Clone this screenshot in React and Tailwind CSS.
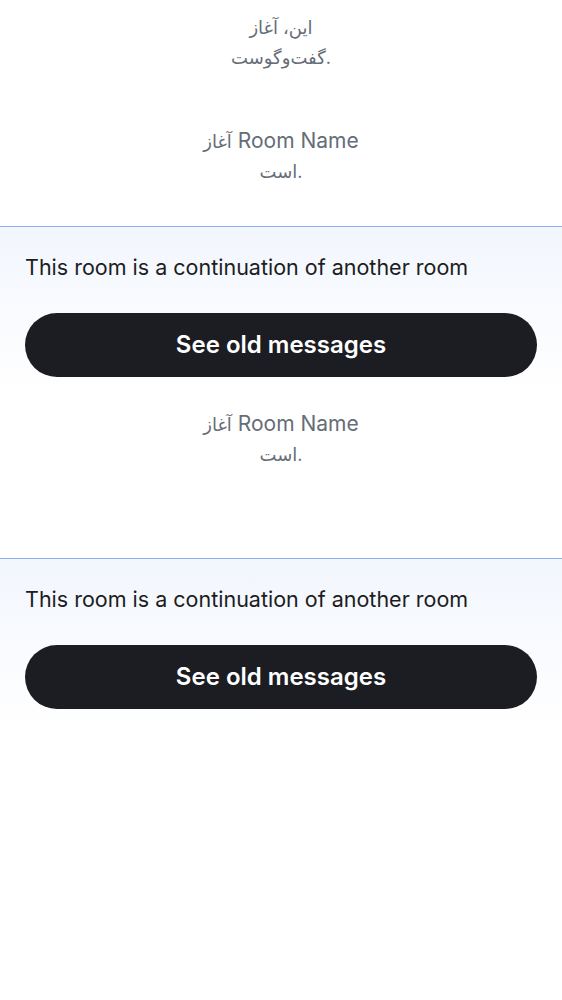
import React from 'react';

const fontStack = { fontFamily: 'Inter, "DejaVu Sans", sans-serif' };

const Fa = ({ children }) => <span className="text-[18px] leading-none">{children}</span>;

const Notice = ({ children }) => (
  <p className="mx-auto w-[168px] text-center text-[21px] leading-[30px] text-[#656d77]">
    {children}
  </p>
);

const RoomStart = () => (
  <Notice>
    <Fa>آغاز</Fa> Room Name <Fa>است.</Fa>
  </Notice>
);

const Predecessor = () => (
  <section className="border-t border-[#8ab2f2] bg-gradient-to-b from-[#f2f6fd] to-white px-[25px] pt-[27px] pb-[18px]">
    <p className="text-[21.5px] leading-[26px] text-[#1b1d22]">This room is a continuation of another room</p>
    <button className="mt-[33px] flex h-16 w-full items-center justify-center rounded-full bg-[#1b1d22] text-[24px] font-semibold text-white">
      See old messages
    </button>
  </section>
);

export default function App() {
  return (
    <div className="min-h-screen bg-white" style={fontStack}>
      <div className="pt-[12px]">
        <Notice>
          <Fa>این، آغاز گفت‌وگوست.</Fa>
        </Notice>
      </div>
      <div className="mt-[54px]">
        <RoomStart />
      </div>
      <div className="mt-[40px]">
        <Predecessor />
      </div>
      <div className="mt-[14px]">
        <RoomStart />
      </div>
      <div className="mt-[89px]">
        <Predecessor />
      </div>
    </div>
  );
}
